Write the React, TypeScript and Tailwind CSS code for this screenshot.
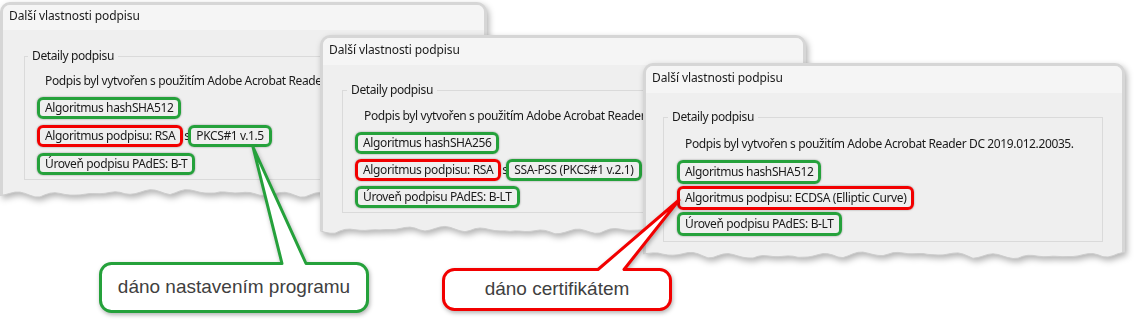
import React, { ReactNode } from 'react';

const uiFont = "font-['Noto_Sans','DejaVu_Sans',sans-serif]";

interface MarkProps {
  tone: 'green' | 'red';
  h: string;
  children: ReactNode;
  className?: string;
}

const Mark: React.FC<MarkProps> = ({ tone, h, children, className = '' }) => (
  <div
    className={`flex w-fit items-center rounded-[6px] border-[3px] px-[5px] shadow-[0_0_2px_rgba(0,0,0,0.4)] ${h} ${
      tone === 'green' ? 'border-[#25a13b]' : 'border-[#f20000]'
    } ${className}`}
  >
    {children}
  </div>
);

// torn paper edge under each window
const TornEdge: React.FC<{ width: number; seed: number }> = ({ width, seed }) => {
  const pts: [number, number][] = [];
  for (let x = 0; x <= width; x += 5) {
    const y =
      7 - 3 * Math.abs(Math.sin(x / 14 + seed)) + 1.2 * Math.sin(x / 5.3 + seed * 3) + 1.5 * Math.sin(x / 41 + seed);
    pts.push([x, y]);
  }
  pts[pts.length - 1][0] = width;
  const edge = pts.map(([x, y]) => `${x},${y.toFixed(1)}`).join(' L');
  const fill = `M0,0 L${edge} L${width},0 Z`;
  return (
    <svg width={width} height={14} className="block -mt-px">
      <path d={fill} fill="#efefef" />
      <path d={`M${edge}`} fill="none" stroke="#cdcdcd" strokeWidth={1} />
      <line x1={1.5} y1={0} x2={1.5} y2={pts[0][1]} stroke="#d6d6d6" strokeWidth={3} />
      <line x1={width - 1.5} y1={0} x2={width - 1.5} y2={pts[pts.length - 1][1]} stroke="#d6d6d6" strokeWidth={3} />
    </svg>
  );
};

interface DialogProps {
  pos: string;
  width: number;
  seed: number;
  titleClass: string;
  groupClass: string;
  legendClass: string;
  introClass: string;
  rowsClass: string;
  children: ReactNode;
}

const Dialog: React.FC<DialogProps> = ({
  pos,
  width,
  seed,
  titleClass,
  groupClass,
  legendClass,
  introClass,
  rowsClass,
  children,
}) => (
  <div className={`absolute [filter:drop-shadow(2px_3px_3px_rgba(0,0,0,0.3))] ${pos}`} style={{ width }}>
    <div className="flex flex-col overflow-hidden rounded-t-[10px] border-[3px] border-b-0 border-[#d6d6d6] bg-[#efefef] text-[12px] leading-[16px] text-[#1a1a1a]">
      <div className={`bg-[#f5f5f5] pl-[6px] tracking-[-0.1px] ${titleClass}`}>Další vlastnosti podpisu</div>
      <fieldset className={`min-w-0 border border-[#dadada] tracking-[-0.38px] ${groupClass}`}>
        <legend className={`px-[4px] ${legendClass}`}>Detaily podpisu</legend>
        <div className={`whitespace-nowrap ${introClass}`}>
          Podpis byl vytvořen s použitím Adobe Acrobat Reader DC 2019.012.20035.
        </div>
        <div className={`flex flex-col ${rowsClass}`}>{children}</div>
      </fieldset>
    </div>
    <TornEdge width={width} seed={seed} />
  </div>
);

function calloutPath(
  x1: number,
  y1: number,
  x2: number,
  y2: number,
  r: number,
  bl: number,
  br: number,
  tx: number,
  ty: number
) {
  return `M${x1 + r},${y1} L${bl},${y1} L${tx},${ty} L${br},${y1} L${x2 - r},${y1} A${r},${r} 0 0 1 ${x2},${y1 + r} L${x2},${
    y2 - r
  } A${r},${r} 0 0 1 ${x2 - r},${y2} L${x1 + r},${y2} A${r},${r} 0 0 1 ${x1},${y2 - r} L${x1},${y1 + r} A${r},${r} 0 0 1 ${
    x1 + r
  },${y1} Z`;
}

export default function App() {
  return (
    <div className={`relative h-[323px] w-[1141px] overflow-hidden bg-white ${uiFont}`}>
      {/* window 1 */}
      <Dialog
        pos="left-[0px] top-[2px]"
        width={487}
        seed={0.4}
        titleClass="h-[25px] pt-[3px]"
        groupClass="ml-[21px] mr-[19px] mt-[18px] mb-[9px] pb-[4px]"
        legendClass="ml-[3px]"
        introClass="pl-[20px] pt-[9px]"
        rowsClass="mt-[8px] gap-[6px] pl-[12px]"
      >
        <Mark tone="green" h="h-[22px]">Algoritmus hashSHA512</Mark>
        <div className="flex items-center">
          <Mark tone="red" h="h-[22px]">Algoritmus podpisu: RSA</Mark>
          <span className="ml-[1px] w-[4px] overflow-hidden">s</span>
          <Mark tone="green" h="h-[22px]">PKCS#1 v.1.5</Mark>
        </div>
        <Mark tone="green" h="h-[22px]">Úroveň podpisu PAdES: B-T</Mark>
      </Dialog>

      {/* window 2 */}
      <Dialog
        pos="left-[320px] top-[35px]"
        width={486}
        seed={2.1}
        titleClass="h-[27px] pt-[4px]"
        groupClass="ml-[19px] mr-[19px] mt-[17px] mb-[13px] pb-[4px]"
        legendClass="ml-[4px]"
        introClass="pl-[21px] pt-[10px]"
        rowsClass="mt-[8px] gap-[5px] pl-[12px]"
      >
        <Mark tone="green" h="h-[22px]">Algoritmus hashSHA256</Mark>
        <div className="flex items-center">
          <Mark tone="red" h="h-[22px]">Algoritmus podpisu: RSA</Mark>
          <span className="ml-[1px] w-[4px] overflow-hidden">s</span>
          <Mark tone="green" h="h-[22px]">SSA-PSS (PKCS#1 v.2.1)</Mark>
        </div>
        <Mark tone="green" h="h-[22px]">Úroveň podpisu PAdES: B-LT</Mark>
      </Dialog>

      {/* window 3 */}
      <Dialog
        pos="left-[643px] top-[63px]"
        width={482}
        seed={4.7}
        titleClass="h-[27px] pt-[4px]"
        groupClass="ml-[17px] mr-[19px] mt-[16px] mb-[9px] pb-[5px]"
        legendClass="ml-[4px]"
        introClass="pl-[21px] pt-[11px]"
        rowsClass="mt-[8px] gap-[2px] pl-[13px]"
      >
        <Mark tone="green" h="h-[24px]">Algoritmus hashSHA512</Mark>
        <Mark tone="red" h="h-[24px]">Algoritmus podpisu: ECDSA (Elliptic Curve)</Mark>
        <Mark tone="green" h="h-[24px]">Úroveň podpisu PAdES: B-LT</Mark>
      </Dialog>

      {/* callouts */}
      <svg
        width={1141}
        height={323}
        className="pointer-events-none absolute left-0 top-0 [filter:drop-shadow(1px_2px_2px_rgba(0,0,0,0.3))]"
      >
        <path
          d={calloutPath(100.5, 263.5, 367.5, 311.5, 11, 282, 306, 253, 147)}
          fill="#ffffff"
          stroke="#25a13b"
          strokeWidth={3}
          strokeLinejoin="round"
        />
        <path
          d={calloutPath(443.5, 269.5, 670.5, 309.5, 11, 598, 624, 679, 200)}
          fill="#ffffff"
          stroke="#f20000"
          strokeWidth={3}
          strokeLinejoin="round"
        />
      </svg>
      <div className="absolute left-[99px] top-[262px] flex h-[51px] w-[270px] items-center justify-center font-['Liberation_Sans',Arial,sans-serif] text-[19px] text-[#404040]">
        dáno nastavením programu
      </div>
      <div className="absolute left-[442px] top-[268px] flex h-[43px] w-[230px] items-center justify-center font-['Liberation_Sans',Arial,sans-serif] text-[19px] text-[#404040]">
        dáno certifikátem
      </div>
    </div>
  );
}
